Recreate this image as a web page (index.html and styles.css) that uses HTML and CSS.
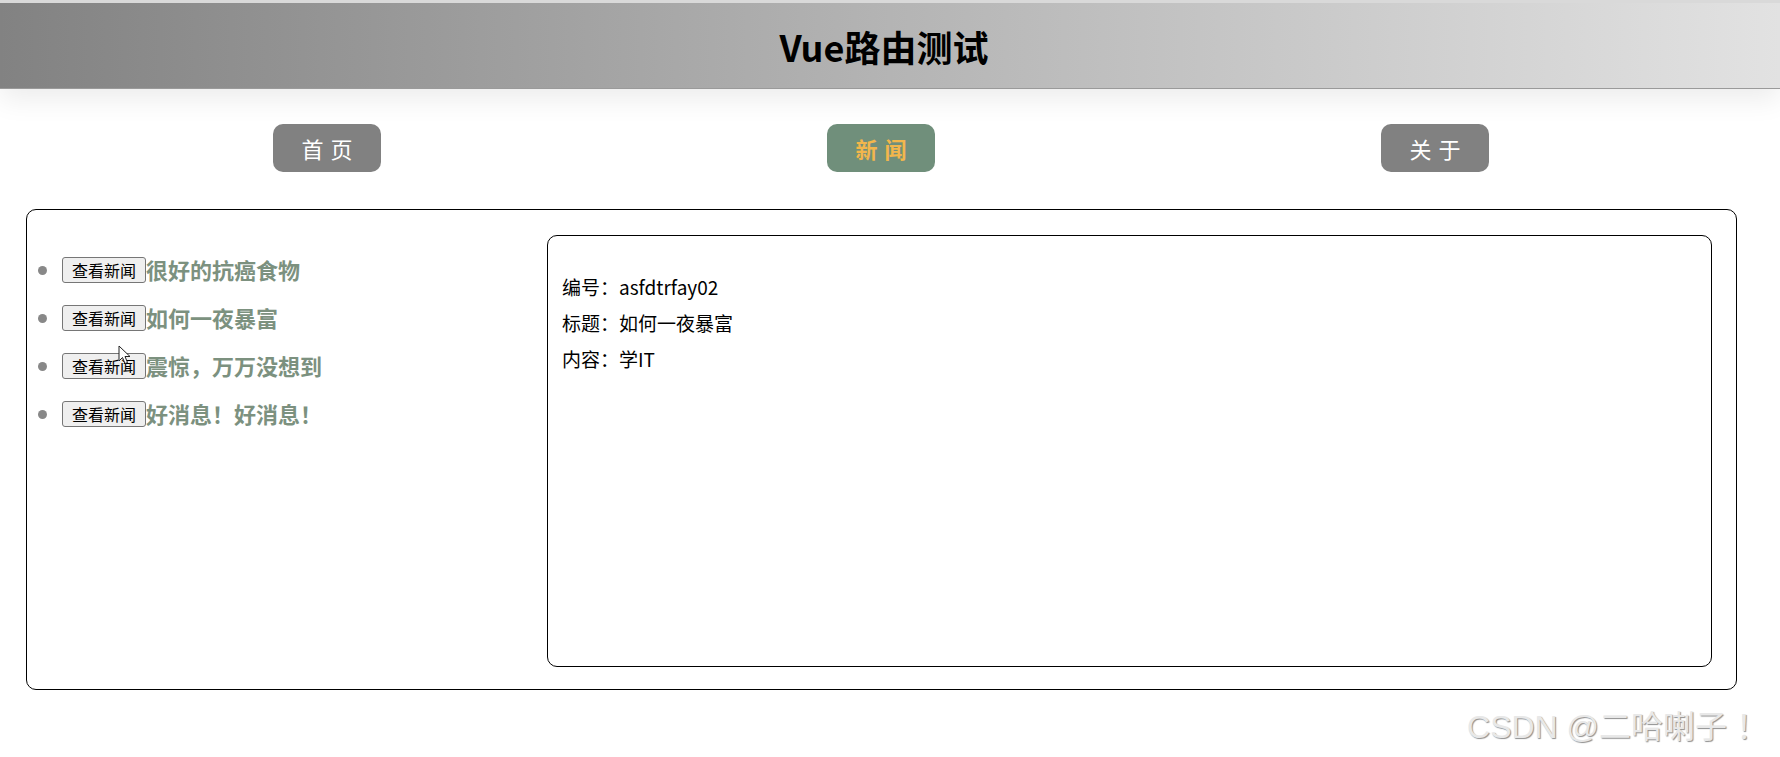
FILE: index.html
```html
<!DOCTYPE html>
<html lang="en">
<head>
    <meta charset="UTF-8">
    <meta name="viewport" content="width=device-width, initial-scale=1.0">
    <title>Vue路由测试</title>
    <link rel="stylesheet" href="styles.css">
</head>
<body>
    <div class="header">
        <h1>Vue路由测试</h1>
    </div>

    <div class="nav">
        <a class="nav-item" href="#">首页</a>
        <a class="nav-item active" href="#">新闻</a>
        <a class="nav-item" href="#">关于</a>
    </div>

    <div class="main">
        <ul class="news-list">
            <li><button>查看新闻</button><a href="#">很好的抗癌食物</a></li>
            <li><button>查看新闻</button><a href="#">如何一夜暴富</a></li>
            <li><button>查看新闻</button><a href="#">震惊，万万没想到</a></li>
            <li><button>查看新闻</button><a href="#">好消息！好消息！</a></li>
        </ul>
        <div class="detail">
            <ul>
                <li>编号：asfdtrfay02</li>
                <li>标题：如何一夜暴富</li>
                <li>内容：学IT</li>
            </ul>
        </div>
    </div>

    <!-- mouse pointer caught in the screenshot -->
    <svg class="cursor" width="13" height="20" viewBox="0 0 13 20">
        <path d="M1 1 L1 16 L4.5 12.5 L7 18.5 L9.5 17.5 L7 11.5 L12 11.5 Z" fill="#fff" stroke="#222" stroke-width="1"/>
    </svg>

    <div class="watermark">CSDN @二哈喇子 ！</div>
</body>
</html>
```

FILE: styles.css
```css
* {
    margin: 0;
    padding: 0;
    box-sizing: border-box;
}
body {
    font-family: "Noto Sans CJK SC", "Noto Sans", sans-serif;
    color: #000;
    background: #fff;
    width: 1780px;
    height: 757px;
    overflow: hidden;
    position: relative;
}
.header {
    height: 89px;
    border-top: 3px solid #d9d9d9;
    border-bottom: 1px solid #9a9a9a;
    background: linear-gradient(to right, #828282, #b4b4b4 50%, #e2e2e2);
    box-shadow: 0 10px 26px rgba(0, 0, 0, 0.08);
    display: flex;
    justify-content: center;
    align-items: center;
}
h1 {
    font-size: 36px;
    font-weight: bold;
    margin-right: 12px;
    margin-top: 1px;
}
.nav {
    display: flex;
    justify-content: space-around;
    margin: 35px 68px 0 50px;
}
.nav-item {
    width: 108px;
    height: 48px;
    line-height: 48px;
    text-align: center;
    border-radius: 10px;
    background-color: #818181;
    color: #fff;
    font-size: 22px;
    letter-spacing: 7px;
    text-indent: 7px;
    text-decoration: none;
}
.nav-item.active {
    background-color: #708f7b;
    color: #f2b64c;
    font-weight: bold;
}
.main {
    display: flex;
    margin: 37px 43px 0 26px;
    height: 481px;
    border: 1px solid #000;
    border-radius: 10px;
}
.news-list {
    width: 520px;
    padding-left: 35px;
    margin-top: 35px;
    color: #888;
}
.news-list li {
    line-height: 48px;
    font-size: 22px;
}
.news-list button {
    font-family: "Noto Sans CJK SC", sans-serif;
    font-size: 16px;
    line-height: 20px;
    padding: 1px 9px;
    height: 26px;
    vertical-align: 2px;
    background: #efefef;
    border: 1px solid #767676;
    border-radius: 3px;
    color: #000;
}
.news-list a {
    color: #7c917f;
    font-weight: bold;
    text-decoration: none;
}
.detail {
    flex: 1;
    margin: 25px 24px 22px 0;
    border: 1px solid #000;
    border-radius: 10px;
    padding: 33px 14px;
}
.detail ul {
    list-style: none;
}
.detail li {
    font-size: 19px;
    line-height: 36px;
}
.cursor {
    position: absolute;
    left: 118px;
    top: 345px;
}
.watermark {
    position: absolute;
    right: 12px;
    bottom: 10px;
    font-family: "Liberation Sans", "Noto Sans CJK SC", sans-serif;
    font-size: 32px;
    color: #e8e8e8;
    text-shadow: 1px 1px 1px #8f8f8f;
}
```
